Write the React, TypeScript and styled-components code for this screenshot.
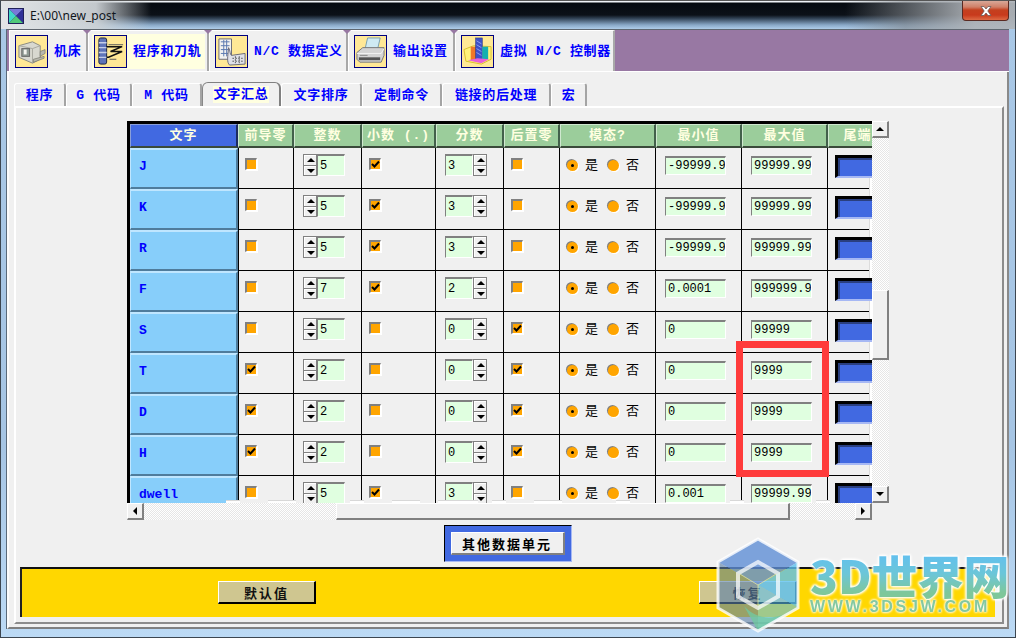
import React from "react";
import styled, { createGlobalStyle } from "styled-components";

const CJK = `"Noto Sans CJK SC", "Liberation Sans", sans-serif`;
const MONO = `"Liberation Mono", "Noto Sans CJK SC", monospace`;
const COLS = "108px 56px 68px 74px 68px 56px 96px 86px 86px 60px";
const DITHER = `repeating-conic-gradient(#e6e6e6 0 25%, #ffffff 0 50%) 0 0 / 2px 2px`;

const Global = createGlobalStyle`
  html, body { margin: 0; padding: 0; background: #a9c8e6; }
  * { box-sizing: border-box; }
`;

const Win = styled.div`
  position: relative; width: 1016px; height: 638px; overflow: hidden;
  display: flex; flex-direction: column;
  border: 1px solid #3c4650; border-top-color: #555;
  background: linear-gradient(#a9c8e6 0, #a6c5e4 70%, #bcdaf5 100%);
`;
const TitleBar = styled.div`
  position: relative; flex: 0 0 28px; display: flex; align-items: center; padding: 0 0 1px 7px; gap: 6px;
  background:
    linear-gradient(to right, rgba(226,229,231,1) 0, rgba(205,210,214,.95) 95px, rgba(170,175,180,0) 150px),
    linear-gradient(to left, rgba(175,180,185,.95) 40px, rgba(130,135,140,.6) 110px, rgba(0,0,0,0) 170px),
    linear-gradient(#f0f4f8 0, #f0f4f8 1px, #050a10 2px, #0c1118 14px, #2c3c4e 17px, #8aa9c8 24px, #afcdea 28px);
`;
const TitleText = styled.span`font: 12px "Noto Sans", "Liberation Sans", sans-serif; color: #10161c; margin-top: 2px;`;
const AppIcon = styled.svg`width: 16px; height: 16px; margin-top: 2px; flex: none;`;
const CloseBtn = styled.div`
  position: absolute; right: 6px; top: 0; width: 47px; height: 20px;
  display: flex; align-items: center; justify-content: center;
  border: 1px solid #5a2a22; border-top: none; border-radius: 0 0 4px 4px;
  background: linear-gradient(#d8a898 0, #d08068 6px, #c4401f 9px, #c83a1c 14px, #dd6a44 19px);
`;
const Body = styled.div`
  flex: 1; margin: 0 6px 8px 5px; display: flex; flex-direction: column; min-height: 0;
  background: #f0f0f0; border-left: 1px solid #5a6a7a;
`;
const TabBar = styled.div`
  flex: 0 0 43px; display: flex; padding-left: 2px;
  background: #9878a3; border-top: 1px solid #5f6770; border-bottom: 1px solid #fff;
`;
const Tab = styled.div<{ $w: number; $last?: boolean }>`
  position: relative; flex: 0 0 ${p => p.$w}px; min-width: 0; display: flex; padding: 3px 2px 2px 3px;
  background: #f0f0f0; border-left: 1px solid #fff; border-top: 1px solid #fff;
  border-right: 2px solid #a8a8a8;
  ${p => !p.$last && `&::after { content: ""; position: absolute; right: -5px; top: -1px; z-index: 2;
    border-left: 4px solid transparent; border-right: 4px solid transparent; border-top: 4px solid #9878a3; }`}
`;
const TabFace = styled.div<{ $active?: boolean }>`
  flex: 1; min-width: 0; display: flex; align-items: center; gap: 6px; padding: 0 0 0 2px; white-space: pre;
  background: ${p => (p.$active ? "#ffffe0" : "transparent")};
  color: #0000ff; font: bold 13px/1 ${MONO}; letter-spacing: .7px;
`;
const TabIcon = styled.svg`
  width: 33px; height: 33px; flex: none; border: 1px solid #000080; background: #ffe896;
`;
const Panel = styled.div`
  flex: 1; display: flex; flex-direction: column; min-height: 0;
  padding: 11px 3px 3px 5px;
  border-left: 2px solid #fcfcfc; border-right: 2px solid #8a8a8a; border-bottom: 2px solid #808080;
`;
const SubTabs = styled.div`flex: 0 0 22px; display: flex; position: relative; z-index: 1;`;
const SubTab = styled.div<{ $w: number; $active?: boolean }>`
  flex: 0 0 ${p => p.$w}px; display: flex; align-items: center; justify-content: center;
  border-right: 2px solid #a4a4a4; border-left: 1px solid #fff; border-top: 1px solid #fff;
  border-radius: 3px 3px 0 0; white-space: pre;
  color: #0000ff; font: bold 13px/1 ${MONO}; letter-spacing: .7px;
  ${p => p.$active && `margin-top: -1px; height: 24px; background: #f0f0f0;
    border-top: 1px solid #808080; border-left: 1px solid #888; border-right: 2px solid #808080; border-radius: 6px 6px 0 0;`}
`;
const SubLabel = styled.span<{ $active?: boolean }>`
  padding: 2px 1px; ${p => p.$active && `background: #ffffe0;`}
`;
const Inner = styled.div`
  flex: 1; min-height: 0; display: flex; flex-direction: column;
  border-top: 2px solid #fff; border-left: 2px solid #fff; border-right: 2px solid #8c8c8c; border-bottom: 2px solid #8c8c8c;
  padding: 13px 0 0 0;
`;
const ScrollArea = styled.div`
  position: relative; margin-left: 111px; width: 762px; height: 399px; flex: none;
  display: grid; grid-template-columns: 745px 17px; grid-template-rows: 382px 17px;
`;
const Viewport = styled.div`
  overflow: hidden; background: #f0f0f0; border-left: 3px solid #000; border-top: 3px solid #000;
`;
const Row = styled.div<{ $h: number }>`
  display: grid; grid-template-columns: ${COLS}; height: ${p => p.$h}px; width: 758px;
`;
const HeadCell = styled.div<{ $blue?: boolean }>`
  display: flex; align-items: center; justify-content: center; white-space: pre;
  background: ${p => (p.$blue ? "#4169e1" : "#9bcd9b")};
  color: #ffffe0; font: bold 13px/1 ${MONO}; letter-spacing: 1px;
  border: 1px solid ${p => (p.$blue ? "#8a9fd8" : "#cfe8cf")};
  border-right: 2px solid ${p => (p.$blue ? "#1c2c60" : "#42604a")}; border-bottom: 2px solid #3a4a3a;
`;
const LabelCell = styled.div`
  display: flex; align-items: center; padding: 0 0 5px 8px;
  background: #87cefa; color: #0000ff; font: bold 13px/1 ${MONO};
  border-top: 2px solid #bfe6ff; border-left: 1px solid #bfe6ff;
  border-right: 2px solid #4f7c9c; border-bottom: 2px solid #4f7c9c;
  box-shadow: 0 1px 0 #000, 1px 0 0 #000;
`;
const Cell = styled.div<{ $pad?: number }>`
  display: flex; align-items: center; padding: 0 0 6px ${p => p.$pad ?? 7}px;
  border-right: 1px solid #000; border-bottom: 1px solid #000;
`;
const Check = styled.div`
  position: relative; width: 12px; height: 12px; background: #ffa500; flex: none; margin-top: -2px;
  border-top: 2px solid #808080; border-left: 2px solid #808080;
  border-right: 1px solid #fff; border-bottom: 1px solid #fff;
  box-shadow: 1px 1px 0 #fff;
`;
const Tick = styled.svg`position: absolute; left: 0; top: 0; width: 9px; height: 9px;`;
const Spinner = styled.div<{ $rev?: boolean }>`
  display: flex; flex-direction: ${p => (p.$rev ? "row-reverse" : "row")}; height: 22px; width: 42px;
`;
const SpinBtns = styled.div`
  flex: 0 0 14px; display: flex; flex-direction: column; gap: 1px; background: #808080; border: 1px solid #808080;
`;
const SpinBtn = styled.div`
  flex: 1; display: flex; align-items: center; justify-content: center;
  background: #f0f0f0; border-top: 1px solid #fff; border-left: 1px solid #fff;
`;
const Tri = styled.span<{ $dir: "up" | "down" | "left" | "right" }>`
  width: 0; height: 0; border-style: solid; border-color: transparent;
  ${p => p.$dir === "up" && `border-width: 0 4px 4px 4px; border-bottom-color: #000;`}
  ${p => p.$dir === "down" && `border-width: 4px 4px 0 4px; border-top-color: #000;`}
  ${p => p.$dir === "left" && `border-width: 4px 4px 4px 0; border-right-color: #000;`}
  ${p => p.$dir === "right" && `border-width: 4px 0 4px 4px; border-left-color: #000;`}
`;
const Field = styled.div<{ $w?: number; $h?: number }>`
  ${p => (p.$w ? `width: ${p.$w}px; height: ${p.$h}px; flex: none;` : `flex: 1;`)}
  display: flex; align-items: center; padding-left: 2px; overflow: hidden;
  background: #e0ffe0; color: #000; font: 12px/1 "Liberation Mono", monospace; white-space: pre;
  border-top: 2px solid #808080; border-left: 1px solid #808080;
  border-right: 1px solid #fff; border-bottom: 1px solid #fff;
`;
const Radio = styled.div<{ $on?: boolean }>`
  width: 11px; height: 11px; border-radius: 50%; flex: none; display: flex; align-items: center; justify-content: center;
  background: #ffa500; box-shadow: -1px -1px 0 #808080, 1px 1px 0 #fff;
  &::after { content: ""; width: 3px; height: 3px; border-radius: 50%; background: ${p => (p.$on ? "#000" : "transparent")}; }
`;
const RadioText = styled.span<{ $w: number }>`
  flex: 0 0 ${p => p.$w}px; padding: 0 0 4px 7px; font: 13px/1 ${CJK}; color: #000;
`;
const ColorBtn = styled.div`
  flex: none; width: 44px; height: 23px; background: #4169e1; margin-top: 2px;
  border-top: 3px solid #000; border-left: 3px solid #000; border-bottom: 2px solid #a6b8f4;
  box-shadow: inset 2px 2px 0 #2a3f80;
`;
const VBar = styled.div`display: flex; flex-direction: column; background: ${DITHER};`;
const HBar = styled.div`display: flex; background: ${DITHER};`;
const ScrollBtn = styled.div`
  flex: 0 0 17px; display: flex; align-items: center; justify-content: center; background: #f0f0f0;
  border-top: 1px solid #fff; border-left: 1px solid #fff; border-right: 2px solid #808080; border-bottom: 2px solid #808080;
`;
const Thumb = styled.div<{ $len: number }>`
  flex: 0 0 ${p => p.$len}px; background: #f0f0f0;
  border-top: 1px solid #fff; border-left: 1px solid #fff; border-right: 2px solid #808080; border-bottom: 2px solid #808080;
`;
const TrackGap = styled.div<{ $len: number }>`flex: 0 0 ${p => p.$len}px;`;
const Corner = styled.div`background: #f0f0f0;`;
const Notch = styled.div<{ $x: number; $w: number }>`
  position: absolute; left: ${p => p.$x}px; top: 379px; width: ${p => p.$w}px; height: 3px;
  background: #fff; border-top: 1px solid #d8d8d8;
`;
const EdgeSliver = styled.div<{ $y: number }>`
  position: absolute; left: 742px; top: ${p => p.$y}px; width: 3px; height: 18px; background: #fff;
  border-left: 1px solid #dcdcdc;
`;
const CenterRow = styled.div`display: flex; justify-content: center; margin-top: 5px; flex: none;`;
const BtnFrame = styled.div`
  margin-left: -3px; width: 128px; height: 37px; padding: 6px; background: #4169e1;
  border-top: 1px solid #000; border-left: 1px solid #000;
  border-right: 1px solid #a6b8f4; border-bottom: 1px solid #a6b8f4;
`;
const GrayBtn = styled.div`
  width: 100%; height: 100%; display: flex; align-items: center; justify-content: center; background: #f0f0f0;
  font: bold 13px/1 ${CJK}; letter-spacing: 2px; color: #000;
  border-top: 1px solid #fff; border-left: 1px solid #fff; border-right: 2px solid #808080; border-bottom: 2px solid #808080;
`;
const Footer = styled.div`
  margin: 5px 0 0 4px; width: 975px; height: 50px; flex: none;
  display: flex; justify-content: space-between; align-items: flex-start;
  padding: 12px 198px 0 196px; background: #ffd700;
  border-top: 2px solid #111; border-left: 2px solid #222;
`;
const TanBtn = styled.div`
  width: 98px; height: 23px; display: flex; align-items: center; justify-content: center;
  background: #cfc690; font: bold 13px/1 ${CJK}; letter-spacing: 2px; color: #111;
  border-top: 1px solid #fff; border-left: 1px solid #fff; border-right: 2px solid #000; border-bottom: 2px solid #000;
`;
const RedBox = styled.div`
  position: absolute; left: 735px; top: 340px; width: 93px; height: 136px; border: 7px solid #ff3b3b;
`;
const Mark = styled.svg`position: absolute; left: 713px; top: 535px; width: 88px; height: 98px;`;
const MarkTitle = styled.div`
  position: absolute; left: 809px; top: 548px; white-space: nowrap; font: 900 46px/50px ${CJK};
  background: linear-gradient(#62c0ee 12%, #6cc6d8 50%, #7ec79a 88%); -webkit-background-clip: text; background-clip: text;
  color: transparent; filter: drop-shadow(0 0 1px #fff) drop-shadow(0 0 1px #fff) drop-shadow(0 0 1px #fff);
`;
const MarkUrl = styled.div`
  position: absolute; left: 809px; top: 598px; white-space: nowrap; font: bold 16px/16px "Liberation Sans", sans-serif;
  letter-spacing: 2.7px; color: #84c8a0; filter: drop-shadow(0 0 1px #fff) drop-shadow(0 0 1px #fff);
`;

type R = { k: string; lead: boolean; i: string; dec: boolean; f: string; trail: boolean; min: string; max: string };
const rows: R[] = [
  { k: "J", lead: false, i: "5", dec: true, f: "3", trail: false, min: "-99999.9", max: "99999.99" },
  { k: "K", lead: false, i: "5", dec: true, f: "3", trail: false, min: "-99999.9", max: "99999.99" },
  { k: "R", lead: false, i: "5", dec: true, f: "3", trail: false, min: "-99999.9", max: "99999.99" },
  { k: "F", lead: false, i: "7", dec: true, f: "2", trail: false, min: "0.0001", max: "999999.9" },
  { k: "S", lead: false, i: "5", dec: false, f: "0", trail: true, min: "0", max: "99999" },
  { k: "T", lead: true, i: "2", dec: false, f: "0", trail: true, min: "0", max: "9999" },
  { k: "D", lead: true, i: "2", dec: false, f: "0", trail: true, min: "0", max: "9999" },
  { k: "H", lead: true, i: "2", dec: false, f: "0", trail: true, min: "0", max: "9999" },
  { k: "dwell", lead: false, i: "5", dec: true, f: "3", trail: false, min: "0.001", max: "99999.99" },
];
const heads = ["前导零", "整数", "小数 (.)", "分数", "后置零", "模态?", "最小值", "最大值", "尾端"];
const subTabs: [string, number][] = [["程序", 52], ["G 代码", 66], ["M 代码", 70], ["文字汇总", 79], ["文字排序", 81], ["定制命令", 80], ["链接的后处理", 109], ["宏", 36]];
const notches: [number, number][] = [[99, 14], [141, 28], [223, 14], [265, 28], [311, 40], [365, 14], [407, 28], [489, 14], [603, 14], [689, 14]];
const slivers = [0, 1, 2, 3, 4, 5, 6, 7].map(i => 57 + 41 * i);

const Box = ({ on }: { on: boolean }) => (
  <Check>{on && <Tick viewBox="0 0 9 9"><path d="M1 4l2.5 2.5L8 1.5" fill="none" stroke="#000" strokeWidth="2" /></Tick>}</Check>
);
const Spin = ({ v, rev }: { v: string; rev?: boolean }) => (
  <Spinner $rev={rev}>
    <SpinBtns>
      <SpinBtn><Tri $dir="up" /></SpinBtn>
      <SpinBtn><Tri $dir="down" /></SpinBtn>
    </SpinBtns>
    <Field>{v}</Field>
  </Spinner>
);

const IconMachine = () => (
  <TabIcon viewBox="0 0 32 32">
    <path d="M3 10l14-4 8 4v14l-8 4-14-6z" fill="#d8d8d0" stroke="#8a8a80" />
    <path d="M3 10l14 3 8-3M17 13v15" fill="none" stroke="#a8a8a0" />
    <rect x="6" y="13" width="8" height="8" fill="#8f9a94" stroke="#666" />
    <rect x="8" y="14" width="3" height="5" fill="#f4f4f0" />
    <path d="M25 16l5-2v4l-5 3zM18 24l11-3v2l-11 4z" fill="#b8b8ae" stroke="#77776c" strokeWidth=".7" />
  </TabIcon>
);
const IconProgram = () => (
  <TabIcon viewBox="0 0 32 32">
    <rect x="4" y="2" width="8" height="27" rx="2" fill="#5f74b8" stroke="#1c2440" />
    <path d="M4 7h8M4 12h8M4 17h8M4 22h8" stroke="#c5cde8" strokeWidth="1.4" />
    <path d="M12 11h16l-12 5h12l-14 6h-2" fill="none" stroke="#111" strokeWidth="1.6" />
    <path d="M14 9h15M15 24h7" stroke="#555" />
  </TabIcon>
);
const IconData = () => (
  <TabIcon viewBox="0 0 32 32">
    <path d="M3 3h13v21H3z" fill="#f2f2f0" stroke="#6a6a78" />
    <path d="M5 6h9M5 10h9M5 14h9M5 18h9M8 4v17M11 4v17" stroke="#5a78b0" strokeWidth="1" />
    <path d="M13 12c2 3 1 7 3 8l14-2v11l-16 1c-3-3-2-8-1-18z" fill="#dfe0e8" stroke="#6a6a78" />
    <path d="M17 23h11M17 26h11M20 21v7M24 21v7" stroke="#444" strokeDasharray="1.5 1.5" />
  </TabIcon>
);
const IconPrinter = () => (
  <TabIcon viewBox="0 0 32 32">
    <path d="M10 15l3-13h13l-3 13z" fill="#cfeaf2" stroke="#7aa0b0" />
    <path d="M2 17l6-5h22v8L27 27H5l-3-3z" fill="#d4d4d4" stroke="#777" />
    <path d="M2 18h25l3-5" fill="none" stroke="#f4f4f4" />
    <path d="M4 22h22v3H4z" fill="#555" />
    <path d="M5 20h8" stroke="#888" />
  </TabIcon>
);
const IconVirtual = () => (
  <TabIcon viewBox="0 0 32 32">
    <path d="M2 14l10-4 18 1v13l-10 5L4 26z" fill="#fff27a" stroke="#d8c030" />
    <rect x="9" y="11" width="6" height="14" fill="#f07828" />
    <rect x="14" y="2" width="7" height="22" fill="#3c50c8" stroke="#24307a" strokeWidth=".5" />
    <path d="M15 5l5 3M15 9l5 3M15 13l5 3M15 17l5 3" stroke="#8ea0f0" />
    <rect x="21" y="11" width="6" height="13" fill="#14b0b0" />
    <path d="M6 25l10-2 12 1-8 4z" fill="#e860d8" />
  </TabIcon>
);

export default function App() {
  return (
    <Win>
      <Global />
      <TitleBar>
        <AppIcon viewBox="0 0 16 16">
          <rect width="16" height="16" fill="#20205a" />
          <path d="M1 1h14L8 8z" fill="#7878d8" />
          <path d="M1 1v14l7-7z" fill="#40d8c8" />
          <path d="M15 1v14L8 8z" fill="#303098" />
          <path d="M1 15h14L8 8z" fill="#50c878" />
        </AppIcon>
        <TitleText>E:\00\new_post</TitleText>
        <CloseBtn>
          <svg width="16" height="12" viewBox="0 0 16 12">
            <path d="M3 1.5h3l2 2.5 2-2.5h3L9.8 6 13 10.5h-3L8 8l-2 2.5H3L6.2 6z" fill="#fff" stroke="#6a5a58" strokeWidth=".8" />
          </svg>
        </CloseBtn>
      </TitleBar>
      <Body>
        <TabBar>
          <Tab $w={79}><TabFace><IconMachine />机床</TabFace></Tab>
          <Tab $w={121}><TabFace $active><IconProgram />程序和刀轨</TabFace></Tab>
          <Tab $w={139}><TabFace><IconData />N/C 数据定义</TabFace></Tab>
          <Tab $w={107}><TabFace><IconPrinter />输出设置</TabFace></Tab>
          <Tab $w={160} $last><TabFace><IconVirtual />虚拟 N/C 控制器</TabFace></Tab>
        </TabBar>
        <Panel>
          <SubTabs>
            {subTabs.map(([t, w]) => (
              <SubTab key={t} $w={w} $active={t === "文字汇总"}>
                <SubLabel $active={t === "文字汇总"}>{t}</SubLabel>
              </SubTab>
            ))}
          </SubTabs>
          <Inner>
            <ScrollArea>
              <Viewport>
                <Row $h={24}>
                  <HeadCell $blue>文字</HeadCell>
                  {heads.map(h => <HeadCell key={h}>{h}</HeadCell>)}
                </Row>
                {rows.map(r => (
                  <Row $h={41} key={r.k}>
                    <LabelCell>{r.k}</LabelCell>
                    <Cell $pad={7}><Box on={r.lead} /></Cell>
                    <Cell $pad={9}><Spin v={r.i} /></Cell>
                    <Cell $pad={7}><Box on={r.dec} /></Cell>
                    <Cell $pad={9}><Spin v={r.f} rev /></Cell>
                    <Cell $pad={7}><Box on={r.trail} /></Cell>
                    <Cell $pad={7}>
                      <Radio $on /><RadioText $w={30}>是</RadioText>
                      <Radio /><RadioText $w={30}>否</RadioText>
                    </Cell>
                    <Cell $pad={9}><Field $w={61} $h={19}>{r.min}</Field></Cell>
                    <Cell $pad={9}><Field $w={61} $h={19}>{r.max}</Field></Cell>
                    <Cell $pad={7}><ColorBtn /></Cell>
                  </Row>
                ))}
              </Viewport>
              <VBar>
                <ScrollBtn><Tri $dir="up" /></ScrollBtn>
                <TrackGap $len={152} />
                <Thumb $len={70} />
                <TrackGap $len={126} />
                <ScrollBtn><Tri $dir="down" /></ScrollBtn>
              </VBar>
              <HBar>
                <ScrollBtn><Tri $dir="left" /></ScrollBtn>
                <TrackGap $len={192} />
                <Thumb $len={454} />
                <TrackGap $len={65} />
                <ScrollBtn><Tri $dir="right" /></ScrollBtn>
              </HBar>
              <Corner />
              {notches.map(([x, w]) => <Notch key={x} $x={x} $w={w} />)}
              {slivers.map(y => <EdgeSliver key={y} $y={y} />)}
            </ScrollArea>
            <CenterRow>
              <BtnFrame><GrayBtn>其他数据单元</GrayBtn></BtnFrame>
            </CenterRow>
            <Footer>
              <TanBtn>默认值</TanBtn>
              <TanBtn>恢复</TanBtn>
            </Footer>
          </Inner>
        </Panel>
      </Body>
      <RedBox />
      <Mark viewBox="0 0 88 98">
        <path d="M44 3L84 26L44 49L4 26z" fill="#5f8fd6" opacity=".8" />
        <path d="M4 26L44 49V95L4 72z" fill="#5b7fa8" opacity=".62" />
        <path d="M84 26V72L44 49z" fill="#5cc0f0" opacity=".8" />
        <path d="M84 72L44 95V49z" fill="#5cc0f0" opacity=".58" />
        <path d="M30 70c14 16 36 14 50 2L44 95z" fill="#70c8a0" opacity=".8" />
        <path d="M44 26l20 11.500v23L44 72 24 60.500v-23z" fill="none" stroke="#fff" strokeOpacity=".72" strokeWidth="4" />
        <path d="M44 49L26 38M44 49l18-11M44 49v21" stroke="#e8e8a0" strokeOpacity=".7" strokeWidth="1" fill="none" />
        <path d="M44 3L84 26V72L44 95L4 72V26z" fill="none" stroke="#fff" strokeOpacity=".8" strokeWidth="3" />
      </Mark>
      <MarkTitle>3D世界网</MarkTitle>
      <MarkUrl>WWW.3DSJW.COM</MarkUrl>
    </Win>
  );
}
